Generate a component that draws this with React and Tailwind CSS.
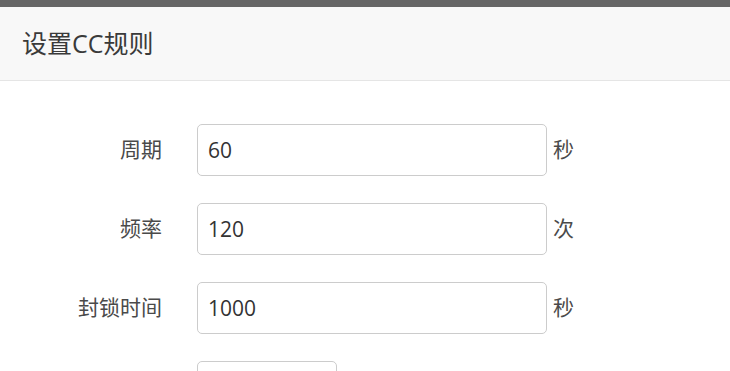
import React, { useState } from 'react'

const font = { fontFamily: '"Microsoft YaHei", "Open Sans", "Noto Sans CJK SC", sans-serif' }

function Row({ label, value, unit, onChange, narrow }) {
  return (
    <div className="flex items-center h-[52px] mb-[27px]">
      <label className="w-[162px] text-right text-[21px] text-[#4a4a4a] shrink-0">{label}</label>
      <input
        type="text"
        value={value}
        onChange={(e) => onChange(e.target.value)}
        className={`ml-[35px] h-[52px] ${narrow ? 'w-[140px]' : 'w-[350px]'} border border-[#ccc] rounded-[5px] px-[10px] text-[21px] text-[#333] bg-white outline-none`}
        style={font}
      />
      {unit && <span className="ml-[6px] text-[21px] text-[#4a4a4a]">{unit}</span>}
    </div>
  )
}

export default function App() {
  const [period, setPeriod] = useState('60')
  const [rate, setRate] = useState('120')
  const [block, setBlock] = useState('1000')
  const [extra, setExtra] = useState('')

  return (
    <div className="w-[730px] h-[371px] overflow-hidden bg-white" style={font}>
      <div className="h-[7px] bg-[#666]" />
      <div className="h-[74px] bg-[#f8f8f8] border-b border-[#e5e5e5] flex items-center px-[22px]">
        <h2 className="text-[25px] text-[#3a3a3a] font-normal">设置CC规则</h2>
      </div>

      <div className="pt-[43px]">
        <Row label="周期" value={period} unit="秒" onChange={setPeriod} />
        <Row label="频率" value={rate} unit="次" onChange={setRate} />
        <Row label="封锁时间" value={block} unit="秒" onChange={setBlock} />
        <Row label="" value={extra} onChange={setExtra} narrow />
      </div>
    </div>
  )
}
